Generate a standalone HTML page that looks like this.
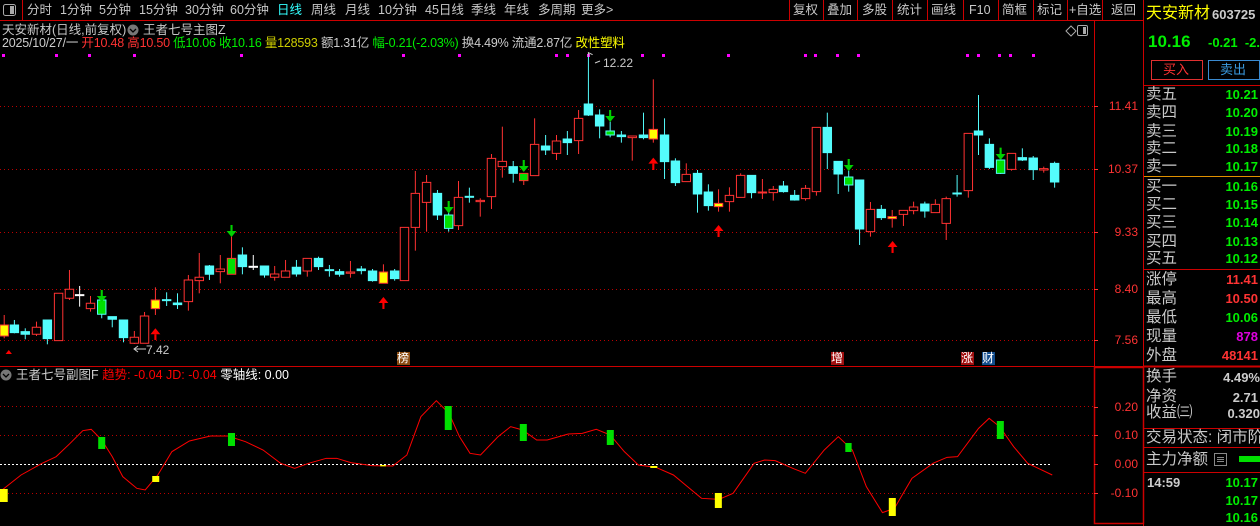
<!DOCTYPE html>
<html><head><meta charset="utf-8"><style>
*{margin:0;padding:0;box-sizing:border-box}
body{width:1260px;height:526px;background:#000;overflow:hidden;position:relative;font-family:"Liberation Sans","Noto Sans CJK SC",sans-serif;font-size:12px;color:#c8c8c8}
.a{position:absolute;white-space:nowrap;line-height:1}
svg{position:absolute;left:0;top:0}
.k *{vector-effect:non-scaling-stroke;stroke-width:1}
.r{fill:#000;stroke:#ff3232}.c{fill:#54fcfc;stroke:#54fcfc}.g{fill:#00e000;stroke:#54fcfc}.y{fill:#ff0;stroke:#ff3232}.w{fill:#fff;stroke:#fff}
.tb{font-size:12.5px;color:#c8c8c8;top:4px}
.lb{font-size:15.5px;color:#c8c8c8;left:1146px}
.vl{font-size:13px;font-weight:bold;right:2px;text-align:right}
</style></head><body>
<svg width="1260" height="526">
<line x1="0" y1="20.5" x2="1143" y2="20.5" stroke="#c00"/>
<line x1="22.5" y1="0" x2="22.5" y2="20" stroke="#c00"/>
<g stroke="#c00"><line x1="789.5" y1="0" x2="789.5" y2="20"/><line x1="823.5" y1="0" x2="823.5" y2="20"/><line x1="857.5" y1="0" x2="857.5" y2="20"/><line x1="892.5" y1="0" x2="892.5" y2="20"/><line x1="927.5" y1="0" x2="927.5" y2="20"/><line x1="963.5" y1="0" x2="963.5" y2="20"/><line x1="998.5" y1="0" x2="998.5" y2="20"/><line x1="1033.5" y1="0" x2="1033.5" y2="20"/><line x1="1067.5" y1="0" x2="1067.5" y2="20"/><line x1="1102.5" y1="0" x2="1102.5" y2="20"/></g>
<line x1="1143.5" y1="0" x2="1143.5" y2="526" stroke="#c00"/>
<line x1="1094.5" y1="20" x2="1094.5" y2="366" stroke="#c00"/>
<line x1="0" y1="366.5" x2="1143" y2="366.5" stroke="#c00"/>
<rect x="1094.5" y="367.5" width="49" height="156" fill="none" stroke="#c00" stroke-width="1.5"/>
<g stroke="#b00" stroke-dasharray="1,3"><line x1="0" y1="106.5" x2="1094" y2="106.5"/><line x1="0" y1="169.5" x2="1094" y2="169.5"/><line x1="0" y1="232.5" x2="1094" y2="232.5"/><line x1="0" y1="289.5" x2="1094" y2="289.5"/><line x1="0" y1="340.5" x2="1094" y2="340.5"/>
<line x1="0" y1="406.5" x2="1094" y2="406.5"/><line x1="0" y1="435.5" x2="1094" y2="435.5"/><line x1="0" y1="493.5" x2="1094" y2="493.5"/></g>
<line x1="0" y1="464.5" x2="1050" y2="464.5" stroke="#fff" stroke-dasharray="2,2"/>
<g stroke="#f33"><line x1="1094" y1="106.5" x2="1098" y2="106.5"/><line x1="1094" y1="169.5" x2="1098" y2="169.5"/><line x1="1094" y1="232.5" x2="1098" y2="232.5"/><line x1="1094" y1="289.5" x2="1098" y2="289.5"/><line x1="1094" y1="340.5" x2="1098" y2="340.5"/>
<line x1="1094" y1="407.5" x2="1098" y2="407.5"/><line x1="1094" y1="435.5" x2="1098" y2="435.5"/><line x1="1094" y1="464.5" x2="1098" y2="464.5"/><line x1="1094" y1="493.5" x2="1098" y2="493.5"/></g>
<g fill="#f0f"><rect x="2" y="54" width="3" height="3"/><rect x="55" y="54" width="3" height="3"/><rect x="88" y="54" width="3" height="3"/><rect x="133" y="54" width="3" height="3"/><rect x="240" y="54" width="3" height="3"/><rect x="402" y="54" width="3" height="3"/><rect x="458" y="54" width="3" height="3"/><rect x="555" y="54" width="3" height="3"/><rect x="566" y="54" width="3" height="3"/><rect x="587" y="54" width="3" height="3"/><rect x="641" y="54" width="3" height="3"/><rect x="662" y="54" width="3" height="3"/><rect x="727" y="54" width="3" height="3"/><rect x="804" y="54" width="3" height="3"/><rect x="814" y="54" width="3" height="3"/><rect x="836" y="54" width="3" height="3"/><rect x="857" y="54" width="3" height="3"/><rect x="966" y="54" width="3" height="3"/><rect x="977" y="54" width="3" height="3"/><rect x="998" y="54" width="3" height="3"/><rect x="1009" y="54" width="3" height="3"/><rect x="1032" y="54" width="3" height="3"/></g>
<g class="k" transform="translate(0,50) scale(0.3508,0.3333)">
<line x1="12" y1="795" x2="12" y2="865" stroke="#ff3232"/><rect class="y" x="0" y="825" width="24" height="33"/>
<line x1="41" y1="810" x2="41" y2="850" stroke="#54fcfc"/><rect class="c" x="29" y="825" width="24" height="23"/>
<line x1="72" y1="835" x2="72" y2="868" stroke="#54fcfc"/><rect class="c" x="60" y="845" width="24" height="8"/>
<line x1="104" y1="815" x2="104" y2="858" stroke="#ff3232"/><rect class="r" x="92" y="832" width="24" height="21"/>
<line x1="135" y1="810" x2="135" y2="883" stroke="#54fcfc"/><rect class="c" x="123" y="810" width="24" height="56"/>
<rect class="r" x="155" y="730" width="24" height="142"/>
<line x1="198" y1="660" x2="198" y2="750" stroke="#ff3232"/><rect class="r" x="186" y="718" width="24" height="27"/>
<line x1="227" y1="708" x2="227" y2="770" stroke="#fff"/><rect class="w" x="215" y="734" width="24" height="3"/>
<line x1="258" y1="738" x2="258" y2="785" stroke="#ff3232"/><rect class="r" x="246" y="760" width="24" height="16"/>
<line x1="290" y1="740" x2="290" y2="805" stroke="#54fcfc"/><rect class="g" x="278" y="750" width="24" height="43"/>
<line x1="320" y1="800" x2="320" y2="832" stroke="#54fcfc"/><rect class="c" x="308" y="800" width="24" height="8"/>
<line x1="352" y1="810" x2="352" y2="877" stroke="#54fcfc"/><rect class="c" x="340" y="810" width="24" height="53"/>
<line x1="383" y1="843" x2="383" y2="882" stroke="#ff3232"/><rect class="r" x="371" y="862" width="24" height="18"/>
<line x1="412" y1="786" x2="412" y2="880" stroke="#ff3232"/><rect class="r" x="400" y="798" width="24" height="82"/>
<line x1="443" y1="712" x2="443" y2="795" stroke="#ff3232"/><rect class="y" x="431" y="750" width="24" height="26"/>
<line x1="475" y1="727" x2="475" y2="768" stroke="#54fcfc"/><rect class="c" x="463" y="749" width="24" height="3"/>
<line x1="506" y1="730" x2="506" y2="777" stroke="#54fcfc"/><rect class="c" x="494" y="759" width="24" height="5"/>
<line x1="537" y1="675" x2="537" y2="782" stroke="#ff3232"/><rect class="r" x="525" y="690" width="24" height="65"/>
<line x1="568" y1="609" x2="568" y2="730" stroke="#ff3232"/><rect class="r" x="556" y="682" width="24" height="10"/>
<line x1="597" y1="645" x2="597" y2="690" stroke="#54fcfc"/><rect class="c" x="585" y="648" width="24" height="25"/>
<line x1="628" y1="615" x2="628" y2="700" stroke="#ff3232"/><rect class="r" x="616" y="657" width="24" height="8"/>
<line x1="660" y1="560" x2="660" y2="673" stroke="#ff3232"/><rect fill="#00e000" stroke="#ff3232" x="648" y="625" width="24" height="48"/>
<line x1="691" y1="592" x2="691" y2="673" stroke="#54fcfc"/><rect class="c" x="679" y="615" width="24" height="35"/>
<line x1="722" y1="615" x2="722" y2="660" stroke="#fff"/><rect class="w" x="710" y="649" width="24" height="3"/>
<line x1="754" y1="648" x2="754" y2="683" stroke="#54fcfc"/><rect class="c" x="742" y="648" width="24" height="27"/>
<line x1="783" y1="648" x2="783" y2="692" stroke="#ff3232"/><rect class="r" x="771" y="672" width="24" height="10"/>
<line x1="814" y1="630" x2="814" y2="682" stroke="#ff3232"/><rect class="r" x="802" y="663" width="24" height="19"/>
<line x1="845" y1="630" x2="845" y2="680" stroke="#54fcfc"/><rect class="c" x="833" y="652" width="24" height="20"/>
<line x1="876" y1="625" x2="876" y2="680" stroke="#ff3232"/><rect class="r" x="864" y="625" width="24" height="38"/>
<line x1="908" y1="620" x2="908" y2="660" stroke="#54fcfc"/><rect class="c" x="896" y="625" width="24" height="25"/>
<line x1="939" y1="645" x2="939" y2="680" stroke="#54fcfc"/><rect class="c" x="927" y="659" width="24" height="3"/>
<line x1="968" y1="657" x2="968" y2="680" stroke="#54fcfc"/><rect class="c" x="956" y="665" width="24" height="8"/>
<line x1="999" y1="633" x2="999" y2="683" stroke="#ff3232"/><rect class="r" x="987" y="666" width="24" height="4"/>
<line x1="1030" y1="648" x2="1030" y2="673" stroke="#54fcfc"/><rect class="c" x="1018" y="657" width="24" height="5"/>
<line x1="1062" y1="657" x2="1062" y2="695" stroke="#54fcfc"/><rect class="c" x="1050" y="663" width="24" height="29"/>
<line x1="1093" y1="643" x2="1093" y2="700" stroke="#ff3232"/><rect class="y" x="1081" y="666" width="24" height="34"/>
<line x1="1125" y1="657" x2="1125" y2="692" stroke="#54fcfc"/><rect class="c" x="1113" y="663" width="24" height="23"/>
<rect class="r" x="1141" y="532" width="24" height="160"/>
<line x1="1184" y1="363" x2="1184" y2="602" stroke="#ff3232"/><rect class="r" x="1172" y="430" width="24" height="102"/>
<line x1="1216" y1="375" x2="1216" y2="545" stroke="#ff3232"/><rect class="r" x="1204" y="397" width="24" height="60"/>
<line x1="1247" y1="420" x2="1247" y2="510" stroke="#54fcfc"/><rect class="c" x="1235" y="430" width="24" height="65"/>
<line x1="1279" y1="455" x2="1279" y2="545" stroke="#54fcfc"/><rect class="g" x="1267" y="495" width="24" height="40"/>
<line x1="1307" y1="393" x2="1307" y2="540" stroke="#ff3232"/><rect class="r" x="1295" y="442" width="24" height="85"/>
<line x1="1338" y1="413" x2="1338" y2="458" stroke="#54fcfc"/><rect class="c" x="1326" y="439" width="24" height="3"/>
<line x1="1369" y1="445" x2="1369" y2="500" stroke="#ff3232"/><rect class="r" x="1357" y="451" width="24" height="4"/>
<line x1="1401" y1="312" x2="1401" y2="477" stroke="#ff3232"/><rect class="r" x="1389" y="325" width="24" height="115"/>
<line x1="1432" y1="230" x2="1432" y2="383" stroke="#ff3232"/><rect class="r" x="1420" y="334" width="24" height="16"/>
<line x1="1463" y1="333" x2="1463" y2="398" stroke="#54fcfc"/><rect class="c" x="1451" y="350" width="24" height="20"/>
<line x1="1493" y1="370" x2="1493" y2="405" stroke="#ff3232"/><rect fill="#00e000" stroke="#ff3232" x="1481" y="370" width="24" height="22"/>
<line x1="1524" y1="205" x2="1524" y2="377" stroke="#ff3232"/><rect class="r" x="1512" y="283" width="24" height="94"/>
<g fill="#00d000" stroke="none">
<rect x="287" y="720" width="6" height="18"/><path d="M276 738H304L290 756Z"/>
<rect x="657" y="525" width="6" height="18"/><path d="M646 543H674L660 561Z"/>
<rect x="1276" y="453" width="6" height="18"/><path d="M1265 471H1293L1279 490Z"/>
<rect x="1490" y="330" width="6" height="18"/><path d="M1479 348H1507L1493 366Z"/>
</g>
<g fill="#f00" stroke="none">
<path d="M429 853H457L443 835Z"/><rect x="440" y="853" width="6" height="17"/>
<path d="M1079 759H1107L1093 741Z"/><rect x="1090" y="759" width="6" height="18"/>
<path d="M16 912H34L25 900Z"/>
</g>
</g>
<g class="k" transform="translate(540,50) scale(0.3508,0.3333)">
<line x1="16" y1="255" x2="16" y2="315" stroke="#54fcfc"/><rect class="c" x="4" y="288" width="24" height="12"/>
<line x1="47" y1="255" x2="47" y2="330" stroke="#ff3232"/><rect class="r" x="35" y="273" width="24" height="37"/>
<line x1="78" y1="243" x2="78" y2="315" stroke="#54fcfc"/><rect class="c" x="66" y="267" width="24" height="11"/>
<line x1="110" y1="180" x2="110" y2="312" stroke="#ff3232"/><rect class="r" x="98" y="205" width="24" height="67"/>
<line x1="138" y1="20" x2="138" y2="198" stroke="#54fcfc"/><rect class="c" x="126" y="162" width="24" height="33"/>
<line x1="170" y1="178" x2="170" y2="265" stroke="#54fcfc"/><rect class="c" x="158" y="195" width="24" height="33"/>
<line x1="200" y1="215" x2="200" y2="262" stroke="#54fcfc"/><rect class="g" x="188" y="243" width="24" height="12"/>
<line x1="232" y1="243" x2="232" y2="278" stroke="#54fcfc"/><rect class="c" x="220" y="255" width="24" height="5"/>
<line x1="263" y1="258" x2="263" y2="332" stroke="#ff3232"/><rect class="r" x="251" y="258" width="24" height="5"/>
<line x1="295" y1="188" x2="295" y2="268" stroke="#54fcfc"/><rect class="c" x="283" y="255" width="24" height="8"/>
<line x1="323" y1="88" x2="323" y2="278" stroke="#ff3232"/><rect class="y" x="311" y="238" width="24" height="29"/>
<line x1="355" y1="205" x2="355" y2="387" stroke="#54fcfc"/><rect class="c" x="343" y="255" width="24" height="80"/>
<line x1="386" y1="325" x2="386" y2="408" stroke="#54fcfc"/><rect class="c" x="374" y="333" width="24" height="65"/>
<line x1="417" y1="340" x2="417" y2="395" stroke="#ff3232"/><rect class="r" x="405" y="373" width="24" height="22"/>
<line x1="449" y1="360" x2="449" y2="488" stroke="#54fcfc"/><rect class="c" x="437" y="370" width="24" height="62"/>
<line x1="480" y1="403" x2="480" y2="482" stroke="#54fcfc"/><rect class="c" x="468" y="426" width="24" height="41"/>
<line x1="509" y1="418" x2="509" y2="485" stroke="#ff3232"/><rect class="y" x="497" y="460" width="24" height="10"/>
<line x1="540" y1="412" x2="540" y2="485" stroke="#ff3232"/><rect class="r" x="528" y="436" width="24" height="19"/>
<line x1="572" y1="370" x2="572" y2="442" stroke="#ff3232"/><rect class="r" x="560" y="376" width="24" height="66"/>
<line x1="603" y1="376" x2="603" y2="445" stroke="#54fcfc"/><rect class="c" x="591" y="376" width="24" height="52"/>
<line x1="634" y1="387" x2="634" y2="447" stroke="#ff3232"/><rect class="r" x="622" y="426" width="24" height="3"/>
<line x1="665" y1="408" x2="665" y2="452" stroke="#ff3232"/><rect class="r" x="653" y="418" width="24" height="10"/>
<line x1="694" y1="393" x2="694" y2="428" stroke="#54fcfc"/><rect class="c" x="682" y="408" width="24" height="17"/>
<line x1="726" y1="420" x2="726" y2="452" stroke="#54fcfc"/><rect class="c" x="714" y="436" width="24" height="14"/>
<line x1="757" y1="405" x2="757" y2="452" stroke="#ff3232"/><rect class="r" x="745" y="415" width="24" height="31"/>
<line x1="788" y1="232" x2="788" y2="437" stroke="#ff3232"/><rect class="r" x="776" y="232" width="24" height="193"/>
<line x1="819" y1="188" x2="819" y2="357" stroke="#54fcfc"/><rect class="c" x="807" y="232" width="24" height="76"/>
<line x1="850" y1="334" x2="850" y2="432" stroke="#54fcfc"/><rect class="c" x="838" y="334" width="24" height="38"/>
<line x1="880" y1="362" x2="880" y2="425" stroke="#54fcfc"/><rect class="g" x="868" y="381" width="24" height="24"/>
<line x1="911" y1="390" x2="911" y2="585" stroke="#54fcfc"/><rect class="c" x="899" y="390" width="24" height="147"/>
<line x1="942" y1="456" x2="942" y2="560" stroke="#ff3232"/><rect class="r" x="930" y="478" width="24" height="67"/>
<line x1="973" y1="465" x2="973" y2="510" stroke="#54fcfc"/><rect class="c" x="961" y="478" width="24" height="25"/>
<line x1="1004" y1="480" x2="1004" y2="533" stroke="#ff3232"/><rect class="y" x="992" y="500" width="24" height="6"/>
<line x1="1036" y1="481" x2="1036" y2="528" stroke="#ff3232"/><rect class="r" x="1024" y="481" width="24" height="12"/>
<line x1="1065" y1="455" x2="1065" y2="493" stroke="#ff3232"/><rect class="r" x="1053" y="471" width="24" height="11"/>
<line x1="1097" y1="455" x2="1097" y2="503" stroke="#54fcfc"/><rect class="c" x="1085" y="462" width="24" height="21"/>
<line x1="1127" y1="448" x2="1127" y2="488" stroke="#ff3232"/><rect class="r" x="1115" y="463" width="24" height="25"/>
<line x1="1158" y1="440" x2="1158" y2="570" stroke="#ff3232"/><rect class="r" x="1146" y="446" width="24" height="74"/>
<line x1="1189" y1="375" x2="1189" y2="440" stroke="#54fcfc"/><rect class="c" x="1177" y="429" width="24" height="3"/>
<line x1="1221" y1="250" x2="1221" y2="443" stroke="#ff3232"/><rect class="r" x="1209" y="250" width="24" height="172"/>
<line x1="1250" y1="135" x2="1250" y2="315" stroke="#54fcfc"/><rect class="c" x="1238" y="243" width="24" height="12"/>
<line x1="1281" y1="265" x2="1281" y2="357" stroke="#54fcfc"/><rect class="c" x="1269" y="283" width="24" height="69"/>
<line x1="1313" y1="330" x2="1313" y2="372" stroke="#54fcfc"/><rect class="g" x="1301" y="330" width="24" height="40"/>
<line x1="1344" y1="310" x2="1344" y2="362" stroke="#ff3232"/><rect class="r" x="1332" y="310" width="24" height="48"/>
<line x1="1375" y1="295" x2="1375" y2="333" stroke="#54fcfc"/><rect class="c" x="1363" y="323" width="24" height="7"/>
<line x1="1406" y1="318" x2="1406" y2="390" stroke="#54fcfc"/><rect class="c" x="1394" y="324" width="24" height="35"/>
<line x1="1436" y1="350" x2="1436" y2="368" stroke="#ff3232"/><rect class="r" x="1424" y="356" width="24" height="4"/>
<line x1="1467" y1="335" x2="1467" y2="413" stroke="#54fcfc"/><rect class="c" x="1455" y="340" width="24" height="56"/>
<g fill="#00d000" stroke="none">
<rect x="197" y="180" width="6" height="18"/><path d="M186 198H214L200 216Z"/>
<rect x="877" y="327" width="6" height="18"/><path d="M866 345H894L880 363Z"/>
<rect x="1310" y="293" width="6" height="19"/><path d="M1299 312H1327L1313 330Z"/>
</g>
<g fill="#f00" stroke="none">
<path d="M309 341H337L323 323Z"/><rect x="320" y="341" width="6" height="19"/>
<path d="M495 543H523L509 525Z"/><rect x="506" y="543" width="6" height="18"/>
<path d="M991 591H1019L1005 573Z"/><rect x="1002" y="591" width="6" height="18"/>
</g>
<polyline points="138,20 138,8 150,14" fill="none" stroke="#ccc"/>
</g>
<g stroke="#ccc" fill="none"><line x1="134" y1="349" x2="146" y2="349"/><path d="M138 346L134 349L138 352"/></g>
<text x="146" y="354" fill="#ccc" font-size="12" font-family="Liberation Sans">7.42</text>
<text x="603" y="67" fill="#ccc" font-size="12" font-family="Liberation Sans">12.22</text>
<path d="M595 63 L600 61" stroke="#ccc"/>
<rect x="397" y="352" width="13" height="13" fill="#8a4a10"/>
<rect x="831" y="352" width="13" height="13" fill="#a01010"/>
<rect x="961" y="352" width="13" height="13" fill="#a01010"/>
<rect x="982" y="352" width="13" height="13" fill="#124c8c"/>
<g class="k" transform="translate(0,380) scale(0.7015,0.3333)">
<polyline fill="none" stroke="#f00" points="0,335 30,285 60,250 80,230 100,190 118,152 130,148 145,180 160,230 175,290 195,325 207,330 225,285 245,215 270,183 300,168 325,168 350,185 375,210 400,250 420,265 440,250 465,235 480,235 500,248 530,257 560,258 580,225 600,110 622,62 640,100 655,170 670,220 685,225 710,170 728,140 745,150 765,180 780,180 810,162 830,160 850,148 870,165 890,215 910,255 935,262 960,285 980,320 1000,355 1025,358 1045,340 1075,250 1090,240 1105,242 1130,265 1148,280 1175,210 1195,170 1215,210 1235,320 1258,398 1275,385 1300,295 1330,250 1350,232 1365,230 1395,145 1410,115 1425,140 1445,200 1465,250 1480,265 1500,285"/>
<g stroke="none">
<rect fill="#ff0" x="0" y="327" width="11" height="39"/>
<rect fill="#00e000" x="140" y="171" width="10" height="36"/>
<rect fill="#ff0" x="217" y="288" width="10" height="18"/>
<rect fill="#00e000" x="325" y="159" width="10" height="39"/>
<rect fill="#ff0" x="542" y="255" width="8" height="4"/>
<rect fill="#00e000" x="634" y="78" width="10" height="72"/>
<rect fill="#00e000" x="741" y="132" width="10" height="51"/>
<rect fill="#00e000" x="865" y="150" width="10" height="45"/>
<rect fill="#ff0" x="927" y="258" width="10" height="6"/>
<rect fill="#ff0" x="1019" y="339" width="10" height="45"/>
<rect fill="#00e000" x="1205" y="189" width="9" height="27"/>
<rect fill="#ff0" x="1267" y="354" width="10" height="54"/>
<rect fill="#00e000" x="1421" y="123" width="10" height="54"/>
</g></g>
<g stroke="#c00"><line x1="1144" y1="85.5" x2="1260" y2="85.5"/><line x1="1144" y1="269.5" x2="1260" y2="269.5"/><line x1="1144" y1="366.5" x2="1260" y2="366.5" stroke-width="2"/><line x1="1144" y1="428.5" x2="1260" y2="428.5"/><line x1="1144" y1="447.5" x2="1260" y2="447.5"/><line x1="1144" y1="472.5" x2="1260" y2="472.5"/></g>
<line x1="1144" y1="176.5" x2="1260" y2="176.5" stroke="#e09000"/>
<rect x="1151.5" y="60.5" width="51" height="19" fill="none" stroke="#e03030"/>
<rect x="1208.5" y="60.5" width="51" height="19" fill="none" stroke="#3a8ad0"/>
<rect x="1239" y="456" width="21" height="6" fill="#00e000"/>
<rect x="3.5" y="4.5" width="12" height="11" rx="2" fill="none" stroke="#aaa"/><rect x="10" y="6" width="4" height="8" fill="#aaa"/>
<circle cx="133" cy="30" r="5.5" fill="#777"/><path d="M130 29L133 32L136 29" stroke="#000" fill="none" stroke-width="1.3"/>
<circle cx="6" cy="375" r="5.5" fill="#777"/><path d="M3 374L6 377L9 374" stroke="#000" fill="none" stroke-width="1.3"/>
<path d="M1066 31L1071 26L1076 31L1071 36Z" fill="none" stroke="#aaa"/>
<rect x="1077.5" y="25.5" width="10" height="10" rx="1.5" fill="none" stroke="#aaa"/><rect x="1083" y="27" width="3" height="7" fill="#aaa"/>
<rect x="1214.5" y="453.5" width="12" height="12" fill="none" stroke="#888"/><g stroke="#888"><line x1="1217" y1="457.5" x2="1224" y2="457.5"/><line x1="1217" y1="459.5" x2="1224" y2="459.5"/><line x1="1217" y1="461.5" x2="1224" y2="461.5"/></g>
</svg>
<div class="a tb" style="left:27px">分时</div><div class="a tb" style="left:60px">1分钟</div><div class="a tb" style="left:99px">5分钟</div><div class="a tb" style="left:139px">15分钟</div><div class="a tb" style="left:185px">30分钟</div><div class="a tb" style="left:230px">60分钟</div><div class="a tb" style="left:277px;color:#3ff">日线</div><div class="a tb" style="left:311px">周线</div><div class="a tb" style="left:345px">月线</div><div class="a tb" style="left:378px">10分钟</div><div class="a tb" style="left:425px">45日线</div><div class="a tb" style="left:471px">季线</div><div class="a tb" style="left:504px">年线</div><div class="a tb" style="left:538px">多周期</div><div class="a tb" style="left:581px">更多&gt;</div>
<div class="a tb" style="left:793px">复权</div><div class="a tb" style="left:827px">叠加</div><div class="a tb" style="left:862px">多股</div><div class="a tb" style="left:897px">统计</div><div class="a tb" style="left:931px">画线</div><div class="a tb" style="left:969px">F10</div><div class="a tb" style="left:1002px">简框</div><div class="a tb" style="left:1037px">标记</div><div class="a tb" style="left:1069px">+自选</div><div class="a tb" style="left:1111px">返回</div>
<div class="a" style="left:2px;top:24px;font-size:12.5px">天安新材(日线,前复权)</div>
<div class="a" style="left:143px;top:24px;font-size:12.5px">王者七号主图Z</div>
<div class="a" style="left:2px;top:37px;font-size:12.5px;letter-spacing:-0.2px"><span style="color:#ccc">2025/10/27/一 </span><span style="color:#f33">开10.48 高10.50 </span><span style="color:#0e0">低10.06 收10.16 </span><span style="color:#cc0">量128593 </span><span style="color:#ccc">额1.31亿 </span><span style="color:#0e0">幅-0.21(-2.03%) </span><span style="color:#ccc">换4.49% 流通2.87亿 </span><span style="color:#ff0">改性塑料</span></div>
<div class="a" style="left:16px;top:369px;font-size:12.5px"><span style="color:#ccc">王者七号副图F </span><span style="color:#f00">趋势: -0.04 JD: -0.04 </span><span style="color:#fff">零轴线: 0.00</span></div>
<div class="a" style="left:397px;top:352px;font-size:12px;color:#fff">榜</div>
<div class="a" style="left:831px;top:352px;font-size:12px;color:#fff">增</div>
<div class="a" style="left:961px;top:352px;font-size:12px;color:#fff">涨</div>
<div class="a" style="left:982px;top:352px;font-size:12px;color:#fff">财</div>
<div class="a" style="right:122px;top:100px;color:#f33;font-size:12px">11.41</div>
<div class="a" style="right:122px;top:163px;color:#f33;font-size:12px">10.37</div>
<div class="a" style="right:122px;top:226px;color:#f33;font-size:12px">9.33</div>
<div class="a" style="right:122px;top:283px;color:#f33;font-size:12px">8.40</div>
<div class="a" style="right:122px;top:334px;color:#f33;font-size:12px">7.56</div>
<div class="a" style="right:122px;top:401px;color:#f33;font-size:12px">0.20</div>
<div class="a" style="right:122px;top:429px;color:#f33;font-size:12px">0.10</div>
<div class="a" style="right:122px;top:458px;color:#f33;font-size:12px">0.00</div>
<div class="a" style="right:122px;top:487px;color:#f33;font-size:12px">-0.10</div>
<div class="a" style="left:1146px;top:6px;font-size:16px;color:#ff0">天安新材</div>
<div class="a" style="left:1212px;top:8px;font-size:13px;font-weight:bold;color:#ccc">603725</div>
<div class="a" style="left:1148px;top:33px;font-size:17px;font-weight:bold;color:#0e0">10.16</div>
<div class="a" style="left:1208px;top:36px;font-size:13px;font-weight:bold;color:#0e0">-0.21 &nbsp;-2.</div>
<div class="a" style="left:1163px;top:63px;font-size:13px;color:#f33">买入</div>
<div class="a" style="left:1220px;top:63px;font-size:13px;color:#3a9ae0">卖出</div>
<div class="a lb" style="top:87px">卖五</div><div class="a vl" style="top:88px;color:#0e0">10.21</div>
<div class="a lb" style="top:105px">卖四</div><div class="a vl" style="top:106px;color:#0e0">10.20</div>
<div class="a lb" style="top:124px">卖三</div><div class="a vl" style="top:125px;color:#0e0">10.19</div>
<div class="a lb" style="top:141px">卖二</div><div class="a vl" style="top:142px;color:#0e0">10.18</div>
<div class="a lb" style="top:159px">卖一</div><div class="a vl" style="top:160px;color:#0e0">10.17</div>
<div class="a lb" style="top:179px">买一</div><div class="a vl" style="top:180px;color:#0e0">10.16</div>
<div class="a lb" style="top:197px">买二</div><div class="a vl" style="top:198px;color:#0e0">10.15</div>
<div class="a lb" style="top:215px">买三</div><div class="a vl" style="top:216px;color:#0e0">10.14</div>
<div class="a lb" style="top:234px">买四</div><div class="a vl" style="top:235px;color:#0e0">10.13</div>
<div class="a lb" style="top:251px">买五</div><div class="a vl" style="top:252px;color:#0e0">10.12</div>
<div class="a lb" style="top:272px">涨停</div><div class="a vl" style="top:273px;color:#f33">11.41</div>
<div class="a lb" style="top:291px">最高</div><div class="a vl" style="top:292px;color:#f33">10.50</div>
<div class="a lb" style="top:310px">最低</div><div class="a vl" style="top:311px;color:#0e0">10.06</div>
<div class="a lb" style="top:329px">现量</div><div class="a vl" style="top:330px;color:#d0d">878</div>
<div class="a lb" style="top:348px">外盘</div><div class="a vl" style="top:349px;color:#f33">48141</div>
<div class="a lb" style="top:369px">换手</div><div class="a vl" style="top:371px;color:#ccc;right:0">4.49%</div>
<div class="a lb" style="top:389px">净资</div><div class="a vl" style="top:391px;color:#ccc">2.71</div>
<div class="a lb" style="top:405px">收益㈢</div><div class="a vl" style="top:407px;color:#ccc;right:0">0.320</div>
<div class="a lb" style="top:430px">交易状态: 闭市阶</div>
<div class="a lb" style="top:452px">主力净额</div>
<div class="a" style="left:1147px;top:476px;font-size:13px;font-weight:bold;color:#ccc">14:59</div>
<div class="a vl" style="top:476px;color:#0e0">10.17</div>
<div class="a vl" style="top:494px;color:#0e0">10.17</div>
<div class="a vl" style="top:511px;color:#0e0">10.16</div>
</body></html>
